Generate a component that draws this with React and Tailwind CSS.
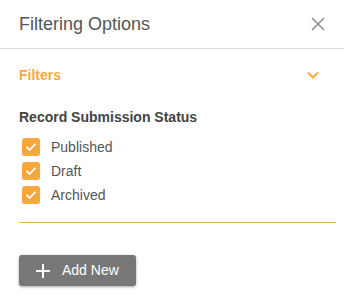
import React from "react";

const statuses = ["Published", "Draft", "Archived"];

const CheckBox = () => (
  <span className="flex h-[18px] w-[18px] items-center justify-center rounded-[3px] bg-[#f7a83b]">
    <svg width="12" height="12" viewBox="0 0 12 12" fill="none">
      <path d="M2 6.3l2.7 2.6L10 3.4" stroke="#fff" strokeWidth="1.8" strokeLinecap="round" strokeLinejoin="round" />
    </svg>
  </span>
);

const App = () => {
  return (
    <div className="h-[297px] w-[344px] bg-white font-['Liberation_Sans',Arial,sans-serif]">
      {/* Header */}
      <div className="flex h-[49px] items-center justify-between border-b border-[#dcdcdc] pl-[19px] pr-[18px]">
        <h1 className="text-[18px] text-[#555]">Filtering Options</h1>
        <svg width="16" height="16" viewBox="0 0 16 16" fill="none">
          <path d="M2 2l12 12M14 2L2 14" stroke="#8a8a8a" strokeWidth="1.5" />
        </svg>
      </div>

      <div className="px-[19px] pr-[8px]">
        {/* Filters accordion */}
        <div className="flex h-[52px] items-center justify-between pr-[16px]">
          <span className="text-[14px] font-bold text-[#f7a83b]">Filters</span>
          <svg width="14" height="10" viewBox="0 0 14 10" fill="none">
            <path d="M2 2.5l5 5 5-5" stroke="#f7a83b" strokeWidth="2" />
          </svg>
        </div>

        <div className="pt-[6px]">
          <h2 className="text-[14px] leading-[20px] font-bold text-[#444]">Record Submission Status</h2>
          <div className="mt-[11px] flex flex-col gap-[6px] pl-[3px]">
            {statuses.map((s) => (
              <label key={s} className="flex h-[18px] items-center gap-[11px]">
                <CheckBox />
                <span className="text-[14px] leading-[18px] text-[#555]">{s}</span>
              </label>
            ))}
          </div>
        </div>

        <div className="mt-[18px] border-t border-[#f0ad55]" />

        <button className="mt-[32px] flex h-[31px] w-[117px] items-center gap-[12px] rounded-[3px] bg-[#777] pl-[17px] text-[14px] text-white shadow-[0_1px_3px_rgba(0,0,0,0.35)]">
          <svg width="14" height="14" viewBox="0 0 14 14" fill="none">
            <path d="M7 0v14M0 7h14" stroke="#fff" strokeWidth="2" />
          </svg>
          Add New
        </button>
      </div>
    </div>
  );
};

export default App;
